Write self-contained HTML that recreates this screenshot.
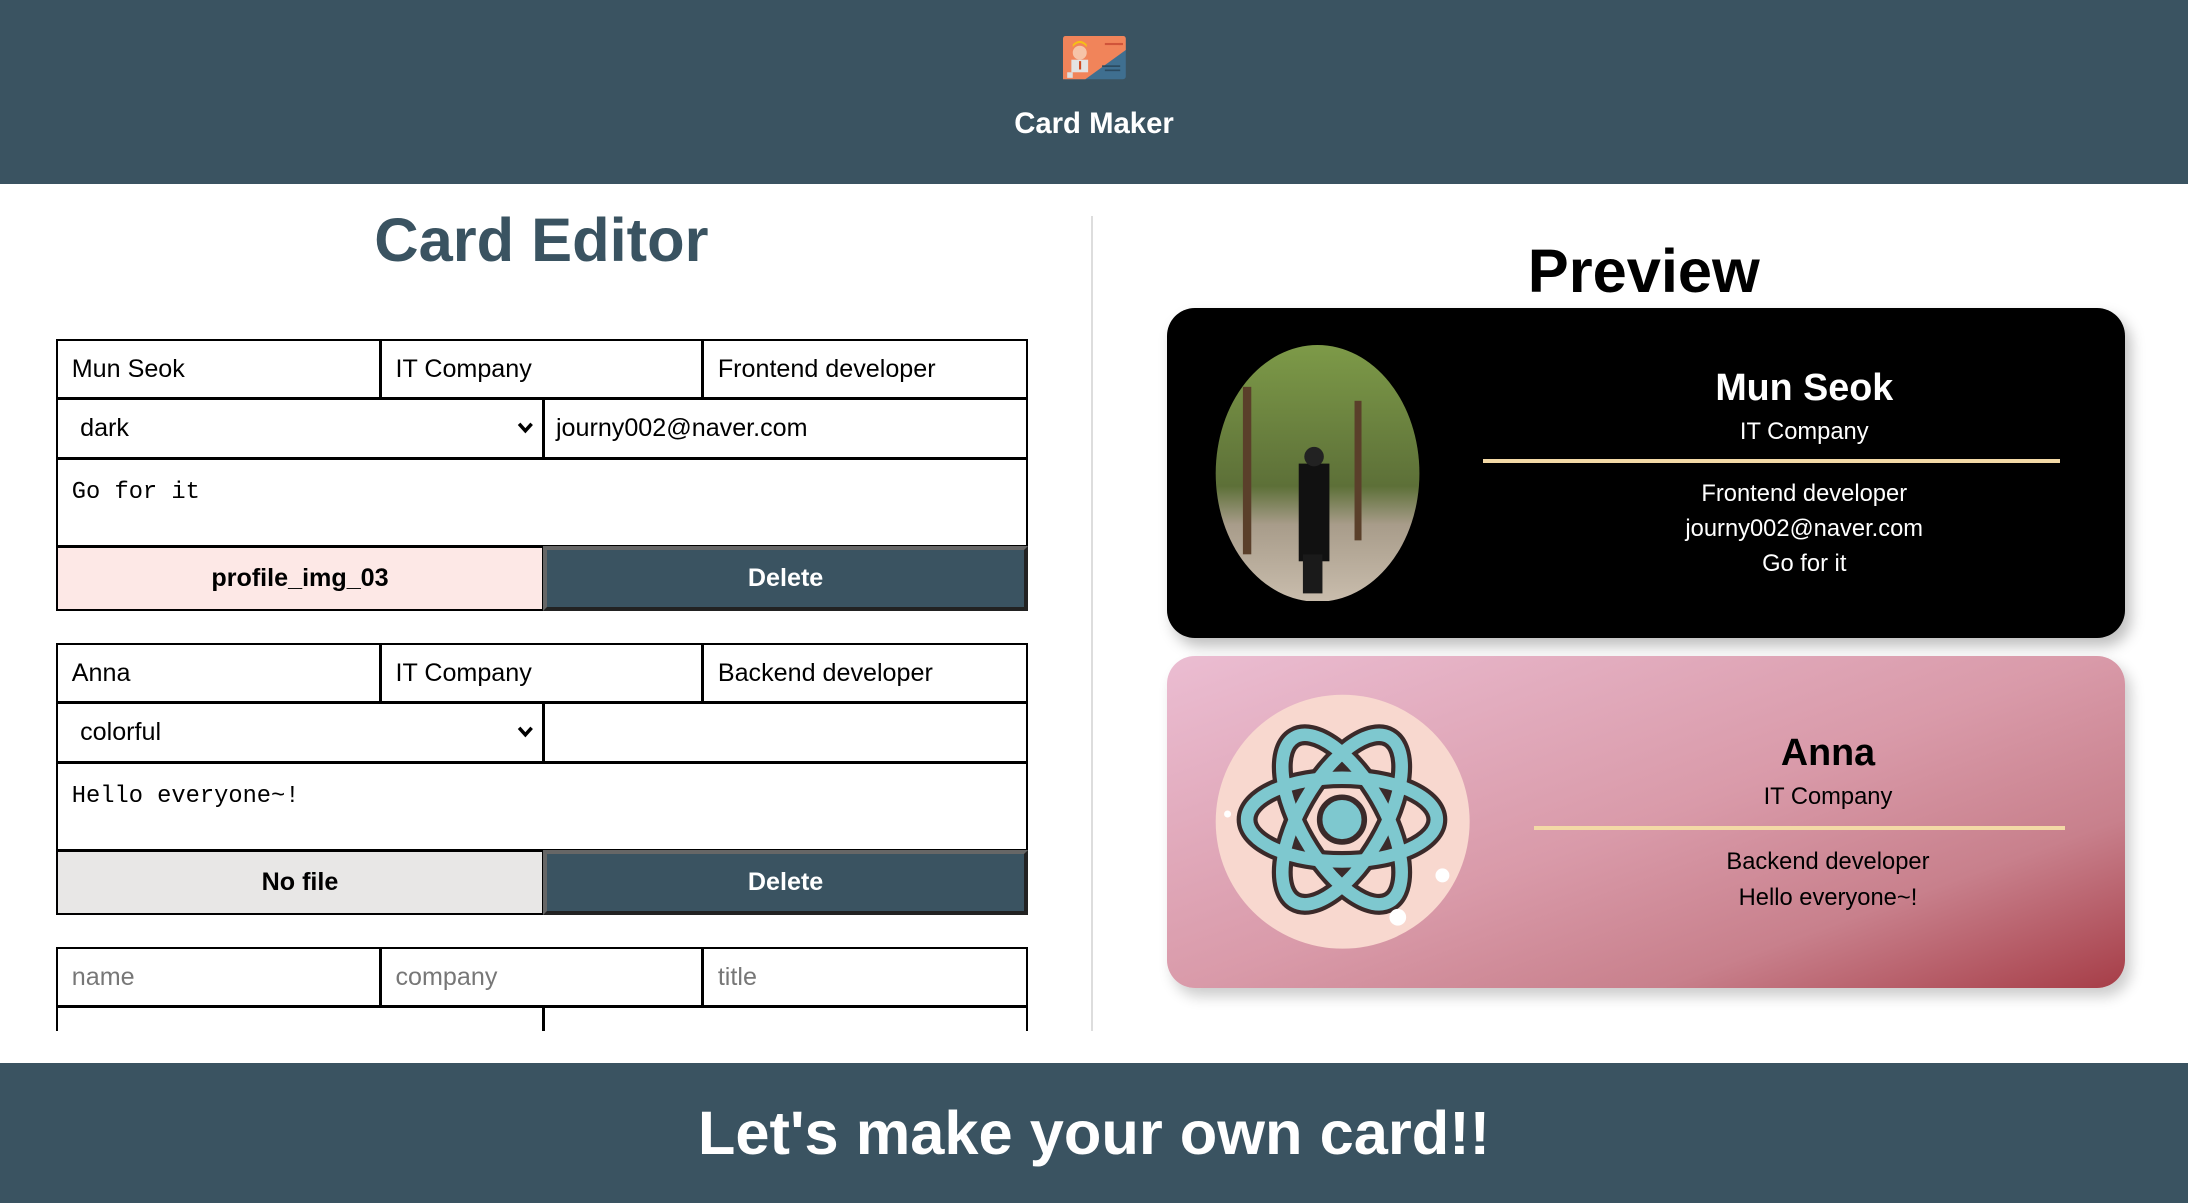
<!DOCTYPE html>
<html><head><meta charset="utf-8"><style>
html,body{margin:0;padding:0;overflow:hidden;background:#fff}
#w{zoom:1.3954;position:relative;width:1568px;height:862px;font-family:"Liberation Sans",sans-serif}
.a{position:absolute}
.hdr{left:0;top:0;width:1568px;height:132px;background:#3a5361}
.ftr{left:0;top:762px;width:1568px;height:100px;background:#3a5361;color:#fff;font-weight:bold;font-size:44px;text-align:center;line-height:102px}
.c{box-sizing:border-box;border:1.5px solid #000;font-size:18px;padding-left:10px;display:flex;align-items:center;background:#fff}
.mono{font-family:"Liberation Mono",monospace;font-size:17px;align-items:flex-start;padding-top:14px}
.btn{justify-content:center;padding:0;font-weight:bold}
.del{background:#3a5361;color:#fff;border:3px solid #222;border-top-color:#666;border-left-color:#666}
.ph{color:#777}
.t{text-align:center;width:600px}
.arr{position:absolute;right:6px;top:15px}
</style></head><body><div id="w">
<div class="a hdr"></div>
<svg class="a" style="left:762px;top:26px" width="45" height="31" viewBox="0 0 45 31">
<rect x="0" y="0" width="45" height="31" rx="2" fill="#3f6f90"/>
<path d="M0 2 Q0 0 2 0 H43 Q45 0 45 2 V10 L16 31 H0Z" fill="#f1845a"/>
<circle cx="12" cy="12" r="5" fill="#f6c4a8"/><path d="M7 8 Q12 2 17 8 V6 Q12 1 7 6Z" fill="#f5c016"/>
<rect x="6" y="17" width="12" height="9" fill="#e3e3e3"/><rect x="11.5" y="18" width="1.5" height="6" fill="#d04a20"/>
<rect x="3" y="26" width="4" height="4" fill="#ddd"/>
<rect x="30" y="5" width="12" height="1.5" fill="#d0543a"/><rect x="40" y="5" width="3" height="1.5" fill="#d0543a"/>
<rect x="28" y="21" width="13" height="1.2" fill="#2b4a60"/><rect x="30" y="24" width="11" height="1.2" fill="#2b4a60"/>
</svg>
<div class="a" style="left:0;width:1568px;top:77px;text-align:center;color:#fff;font-weight:bold;font-size:21px">Card Maker</div>
<div class="a" style="left:782px;top:155px;width:1px;height:584px;background:#ddd"></div>
<div class="a" style="left:88px;width:600px;top:147px;text-align:center;color:#3a5361;font-weight:bold;font-size:44px">Card Editor</div>

<div class="a" style="left:40px;top:243px;width:697px;height:496px;overflow:hidden">
<div style="position:relative">
<div class="a c" style="left:0;top:0;width:233px;height:43px">Mun Seok</div>
<div class="a c" style="left:232px;top:0;width:232px;height:43px">IT Company</div>
<div class="a c" style="left:463px;top:0;width:234px;height:43px">Frontend developer</div>
<div class="a c" style="left:0;top:42px;width:350px;height:44px;padding-left:16px">dark<svg class="arr" width="12" height="10" viewBox="0 0 12 10"><path d="M1.5 2 L6 7 L10.5 2" fill="none" stroke="#000" stroke-width="2.5"/></svg></div>
<div class="a c" style="left:349px;top:42px;width:348px;height:44px;padding-left:8px">journy002@naver.com</div>
<div class="a c mono" style="left:0;top:85px;width:697px;height:64px">Go for it</div>
<div class="a c btn" style="left:0;top:148px;width:350px;height:47px;background:#fde8e6">profile_img_03</div>
<div class="a c btn del" style="left:349px;top:148px;width:348px;height:47px">Delete</div>

<div class="a c" style="left:0;top:218px;width:233px;height:43px">Anna</div>
<div class="a c" style="left:232px;top:218px;width:232px;height:43px">IT Company</div>
<div class="a c" style="left:463px;top:218px;width:234px;height:43px">Backend developer</div>
<div class="a c" style="left:0;top:260px;width:350px;height:44px;padding-left:16px">colorful<svg class="arr" width="12" height="10" viewBox="0 0 12 10"><path d="M1.5 2 L6 7 L10.5 2" fill="none" stroke="#000" stroke-width="2.5"/></svg></div>
<div class="a c" style="left:349px;top:260px;width:348px;height:44px"></div>
<div class="a c mono" style="left:0;top:303px;width:697px;height:64px">Hello everyone~!</div>
<div class="a c btn" style="left:0;top:366px;width:350px;height:47px;background:#e8e7e6">No file</div>
<div class="a c btn del" style="left:349px;top:366px;width:348px;height:47px">Delete</div>

<div class="a c ph" style="left:0;top:436px;width:233px;height:43px">name</div>
<div class="a c ph" style="left:232px;top:436px;width:232px;height:43px">company</div>
<div class="a c ph" style="left:463px;top:436px;width:234px;height:43px">title</div>
<div class="a c" style="left:0;top:478px;width:350px;height:44px"></div>
<div class="a c" style="left:349px;top:478px;width:348px;height:44px"></div>
</div></div>

<div class="a" style="left:878px;width:600px;top:169px;text-align:center;font-weight:bold;font-size:44px;color:#000">Preview</div>

<div class="a" style="left:836px;top:221px;width:687px;height:236px;background:#000;border-radius:20px;box-shadow:4px 6px 10px rgba(0,0,0,.25)"></div>
<svg class="a" style="left:871px;top:247px" width="147" height="184"><defs><linearGradient id="g1" x1="0" y1="0" x2="0" y2="1"><stop offset="0" stop-color="#7d9a48"/><stop offset=".55" stop-color="#5d7038"/><stop offset=".7" stop-color="#a89c8a"/><stop offset="1" stop-color="#c9bdad"/></linearGradient></defs>
<ellipse cx="73.5" cy="92" rx="73" ry="92" fill="url(#g1)"/>
<rect x="20" y="30" width="6" height="120" fill="#5a3f2a"/><rect x="100" y="40" width="5" height="100" fill="#5a3f2a"/>
<rect x="60" y="85" width="22" height="70" fill="#111"/><circle cx="71" cy="80" r="7" fill="#222"/><rect x="63" y="150" width="14" height="28" fill="#1a1a1a"/></svg>
<div class="a t" style="left:993px;top:262px;color:#fff;font-weight:bold;font-size:27px">Mun Seok</div>
<div class="a t" style="left:993px;top:300px;color:#fff;font-size:17px">IT Company</div>
<div class="a" style="left:1063px;top:329px;width:413px;height:3px;background:#f3d9a6"></div>
<div class="a t" style="left:993px;top:342px;color:#fff;font-size:17px;line-height:25px">Frontend developer<br>journy002@naver.com<br>Go for it</div>

<div class="a" style="left:836px;top:470px;width:687px;height:238px;border-radius:20px;background:linear-gradient(160deg,#ebbdd2 0%,#d99aa9 50%,#c8808c 75%,#a63d47 100%);box-shadow:4px 6px 10px rgba(0,0,0,.2)"></div>
<svg class="a" style="left:871px;top:497px" width="183" height="183" viewBox="0 0 183 183">
<circle cx="91.5" cy="91.5" r="91" fill="#f8d8cf"/>
<g fill="none" stroke="#3b2a2a" stroke-width="15"><ellipse cx="91" cy="90" rx="68" ry="30"/><ellipse cx="91" cy="90" rx="68" ry="30" transform="rotate(60 91 90)"/><ellipse cx="91" cy="90" rx="68" ry="30" transform="rotate(-60 91 90)"/></g>
<g fill="none" stroke="#7ec8cf" stroke-width="9"><ellipse cx="91" cy="90" rx="68" ry="30"/><ellipse cx="91" cy="90" rx="68" ry="30" transform="rotate(60 91 90)"/><ellipse cx="91" cy="90" rx="68" ry="30" transform="rotate(-60 91 90)"/></g>
<circle cx="91" cy="90" r="16" fill="#7ec8cf" stroke="#3b2a2a" stroke-width="4"/>
<circle cx="163" cy="130" r="5" fill="#fff"/><circle cx="131" cy="160" r="6" fill="#fff"/><circle cx="9" cy="86" r="2.5" fill="#fff"/></svg>
<div class="a t" style="left:1010px;top:524px;color:#000;font-weight:bold;font-size:27px">Anna</div>
<div class="a t" style="left:1010px;top:562px;color:#000;font-size:17px">IT Company</div>
<div class="a" style="left:1099px;top:592px;width:381px;height:3px;background:#f3d9a6"></div>
<div class="a t" style="left:1010px;top:605px;color:#000;font-size:17px;line-height:26px">Backend developer<br>Hello everyone~!</div>

<div class="a ftr">Let's make your own card!!</div>
</div></body></html>
